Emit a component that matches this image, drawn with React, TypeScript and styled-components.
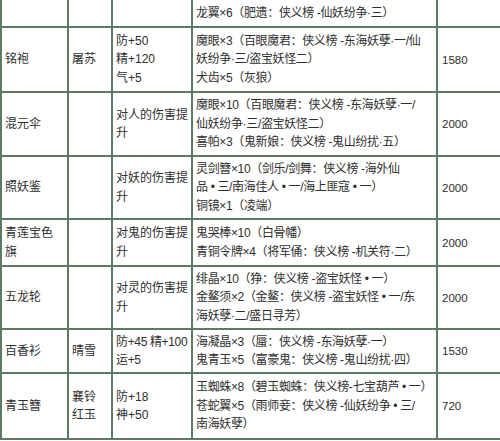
import { createGlobalStyle } from 'styled-components';
import styled from 'styled-components';

const GlobalStyle = createGlobalStyle`
  html, body {
    margin: 0;
    padding: 0;
    background: #ffffff;
    overflow: hidden;
  }
`;

const Page = styled.div`
  width: 500px;
  height: 441px;
  overflow: hidden;
  background: #ffffff;
`;

const Table = styled.table`
  width: 502px;
  table-layout: fixed;
  border-collapse: collapse;
  border-top: none;
  font-family: "Liberation Sans", "Noto Sans CJK SC", sans-serif;
  font-size: 12px;
  color: #2e2e2e;
`;

const Col = styled.col<{ $w: number }>`
  width: ${p => p.$w}px;
`;

const Row = styled.tr<{ $h: number }>`
  height: ${p => p.$h}px;
`;

const Cell = styled.td<{ $first?: boolean; $tight?: boolean }>`
  border: 2px solid #5b7b63;
  border-top: ${p => (p.$first ? 'none' : '2px solid #5b7b63')};
  padding: 0 0 0 3px;
  vertical-align: middle;
  overflow: hidden;
  letter-spacing: ${p => (p.$tight ? '-0.35px' : '0')};
`;

const NumCell = styled(Cell)`
  font-size: 11.5px;
  padding-left: 4px;
`;

const Line = styled.div`
  line-height: 18.5px;
  white-space: nowrap;
`;

type RowData = {
  h: number;
  name: string[];
  who: string[];
  attr: string[];
  mats: string[];
  price: string;
};

const widths = [67, 44, 80, 245, 66];

const rows: RowData[] = [
  {
    h: 27,
    name: [],
    who: [],
    attr: [],
    mats: ['龙翼×6（肥遗：侠义榜 -仙妖纷争·三）'],
    price: '',
  },
  {
    h: 65,
    name: ['铭袍'],
    who: ['屠苏'],
    attr: ['防+50', '精+120', '气+5'],
    mats: ['魔眼×3（百眼魔君：侠义榜 -东海妖孽·一/仙', '妖纷争·三/盗宝妖怪二）', '犬齿×5（灰狼）'],
    price: '1580',
  },
  {
    h: 64,
    name: ['混元伞'],
    who: [],
    attr: ['对人的伤害提', '升'],
    mats: ['魔眼×10（百眼魔君：侠义榜 -东海妖孽·一/', '仙妖纷争·三/盗宝妖怪二）', '喜帕×3（鬼新娘：侠义榜 -鬼山纷扰·五）'],
    price: '2000',
  },
  {
    h: 63,
    name: ['照妖鉴'],
    who: [],
    attr: ['对妖的伤害提', '升'],
    mats: ['灵剑簪×10（剑乐/剑舞：侠义榜 -海外仙', '品 • 三/南海佳人 • 一/海上匪寇 • 一）', '铜镜×1（凌端）'],
    price: '2000',
  },
  {
    h: 47,
    name: ['青莲宝色', '旗'],
    who: [],
    attr: ['对鬼的伤害提', '升'],
    mats: ['鬼哭棒×10（白骨幡）', '青铜令牌×4（将军俑：侠义榜 -机关符·二）'],
    price: '2000',
  },
  {
    h: 63,
    name: ['五龙轮'],
    who: [],
    attr: ['对灵的伤害提', '升'],
    mats: ['绯晶×10（狰：侠义榜 -盗宝妖怪 • 一）', '金鳌须×2（金鳌：侠义榜 -盗宝妖怪 • 一/东', '海妖孽·二/盛日寻芳）'],
    price: '2000',
  },
  {
    h: 44,
    name: ['百香衫'],
    who: ['晴雪'],
    attr: ['防+45 精+100', '运+5'],
    mats: ['海凝晶×3（蜃：侠义榜 -东海妖孽·一）', '鬼青玉×5（富豪鬼：侠义榜 -鬼山纷扰·四）'],
    price: '1530',
  },
  {
    h: 66,
    name: ['青玉簪'],
    who: ['襄铃', '红玉'],
    attr: ['防+18', '神+50'],
    mats: ['玉蜘蛛×8（碧玉蜘蛛：侠义榜-七宝葫芦 • 一）', '苍蛇翼×5（雨师妾：侠义榜 -仙妖纷争 • 三/', '南海妖孽）'],
    price: '720',
  },
];

function Lines({ items }: { items: string[] }) {
  return (
    <>
      {items.map((t, i) => (
        <Line key={i}>{t}</Line>
      ))}
    </>
  );
}

export default function App() {
  return (
    <Page>
      <GlobalStyle />
      <Table>
        <colgroup>
          {widths.map((w, i) => (
            <Col key={i} $w={w} />
          ))}
        </colgroup>
        <tbody>
          {rows.map((r, i) => {
            const first = i === 0;
            const tightAttr = r.attr.some(t => t.length > 8);
            return (
              <Row key={i} $h={r.h}>
                <Cell $first={first}>
                  <Lines items={r.name} />
                </Cell>
                <Cell $first={first}>
                  <Lines items={r.who} />
                </Cell>
                <Cell $first={first} $tight={tightAttr}>
                  <Lines items={r.attr} />
                </Cell>
                <Cell $first={first} $tight>
                  <Lines items={r.mats} />
                </Cell>
                <NumCell $first={first}>{r.price}</NumCell>
              </Row>
            );
          })}
        </tbody>
      </Table>
    </Page>
  );
}
